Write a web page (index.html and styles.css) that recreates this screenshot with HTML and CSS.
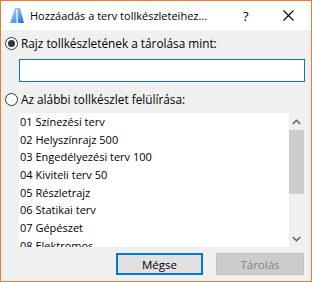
FILE: index.html
```html
<!DOCTYPE html>
<html lang="hu">
<head>
    <meta charset="UTF-8">
    <meta name="viewport" content="width=device-width, initial-scale=1.0">
    <title>Hozzáadás a terv tollkészleteihez</title>
    <link rel="stylesheet" href="styles.css">
</head>
<body>
    <div class="window">
        <div class="titlebar">
            <svg class="app-icon" width="14" height="15" viewBox="0 0 14 15">
                <defs>
                    <linearGradient id="ic" x1="0" y1="0" x2="1" y2="1">
                        <stop offset="0" stop-color="#bcdcfb"/>
                        <stop offset="1" stop-color="#1f6fd8"/>
                    </linearGradient>
                </defs>
                <polygon points="0,15 5,0 10,0 14,15" fill="url(#ic)"/>
                <polygon points="6,1 7.5,1 8,15 6.5,15" fill="#ffffff" opacity="0.8"/>
            </svg>
            <span class="title">Hozzáadás a terv tollkészleteihez...</span>
            <span class="help">?</span>
            <svg class="close" width="11" height="11" viewBox="0 0 11 11">
                <path d="M0.5 0.5 L10.5 10.5 M10.5 0.5 L0.5 10.5" stroke="#000" stroke-width="1.1"/>
            </svg>
        </div>

        <div class="content">
            <label class="radio-row">
                <span class="radio checked"></span>
                Rajz tollkészletének a tárolása mint:
            </label>
            <div class="textbox"></div>

            <label class="radio-row second">
                <span class="radio"></span>
                Az alábbi tollkészlet felülírása:
            </label>

            <div class="listbox">
                <ul class="items">
                    <li>01 Színezési terv</li>
                    <li>02 Helyszínrajz 500</li>
                    <li>03 Engedélyezési terv 100</li>
                    <li>04 Kiviteli terv 50</li>
                    <li>05 Részletrajz</li>
                    <li>06 Statikai terv</li>
                    <li>07 Gépészet</li>
                    <li>08 Elektromos</li>
                </ul>
                <div class="scrollbar">
                    <div class="arrow">
                        <svg width="9" height="6" viewBox="0 0 9 6"><polyline points="0.8,5 4.5,1.3 8.2,5" fill="none" stroke="#606060" stroke-width="1.6"/></svg>
                    </div>
                    <div class="thumb"></div>
                    <div class="track"></div>
                    <div class="arrow">
                        <svg width="9" height="6" viewBox="0 0 9 6"><polyline points="0.8,1 4.5,4.7 8.2,1" fill="none" stroke="#606060" stroke-width="1.6"/></svg>
                    </div>
                </div>
            </div>

            <div class="buttons">
                <button class="btn default">Mégse</button>
                <button class="btn disabled">Tárolás</button>
            </div>
        </div>
    </div>
</body>
</html>
```

FILE: styles.css
```css
body {
    margin: 0;
    padding: 0;
    font-family: 'Open Sans', 'Noto Sans', sans-serif;
    font-size: 12px;
    color: #000;
}
.window {
    width: 312px;
    height: 282px;
    box-sizing: border-box;
    border: 1px solid #ef7b2e;
    background: #f0f0f0;
    display: flex;
    flex-direction: column;
}
.titlebar {
    height: 29px;
    background: #fff;
    display: flex;
    align-items: center;
    padding-left: 9px;
    flex-shrink: 0;
}
.app-icon {
    margin-right: 6px;
    flex-shrink: 0;
}
.title {
    font-size: 11px;
    flex: 1;
    min-width: 0;
    white-space: nowrap;
}
.help {
    width: 10px;
    font-size: 13px;
    margin-right: 30px;
    flex-shrink: 0;
}
.close {
    margin-right: 17px;
    flex-shrink: 0;
}
.content {
    padding: 7px 7px 0 4px;
    display: flex;
    flex-direction: column;
}
.radio-row {
    height: 13px;
    display: flex;
    align-items: center;
    line-height: 13px;
    font-size: 11.8px;
}
.radio-row.second {
    margin-top: 11px;
}
.radio {
    width: 13px;
    height: 13px;
    box-sizing: border-box;
    border: 1px solid #333;
    border-radius: 50%;
    background: #fff;
    margin-right: 3px;
    display: flex;
    align-items: center;
    justify-content: center;
}
.radio.checked::after {
    content: "";
    width: 7px;
    height: 7px;
    border-radius: 50%;
    background: #333;
}
.textbox {
    margin: 9px 0 0 14px;
    width: 286px;
    height: 23px;
    box-sizing: border-box;
    border: 1px solid #0078d7;
    background: #fff;
}
.listbox {
    margin: 7px 0 0 14px;
    width: 285px;
    height: 134px;
    display: flex;
}
.items {
    list-style: none;
    margin: 0;
    padding: 0 0 0 1px;
    flex: 1;
    background: #fff;
    overflow: hidden;
    font-size: 11px;
}
.items li {
    height: 17.7px;
    line-height: 18px;
    white-space: nowrap;
}
.scrollbar {
    width: 15px;
    display: flex;
    flex-direction: column;
}
.arrow {
    height: 17px;
    display: flex;
    align-items: center;
    justify-content: center;
}
.thumb {
    height: 64px;
    background: #cdcdcd;
}
.track {
    flex: 1;
}
.buttons {
    margin-top: 6px;
    display: flex;
    justify-content: flex-end;
    gap: 13px;
}
.btn {
    height: 22px;
    box-sizing: border-box;
    font-family: inherit;
    font-size: 11.5px;
    padding: 0;
}
.btn.default {
    width: 87px;
    background: #e1e1e1;
    border: 2px solid #0078d7;
    color: #000;
}
.btn.disabled {
    width: 88px;
    background: #cccccc;
    border: 1px solid #bfbfbf;
    color: #838383;
}
```
